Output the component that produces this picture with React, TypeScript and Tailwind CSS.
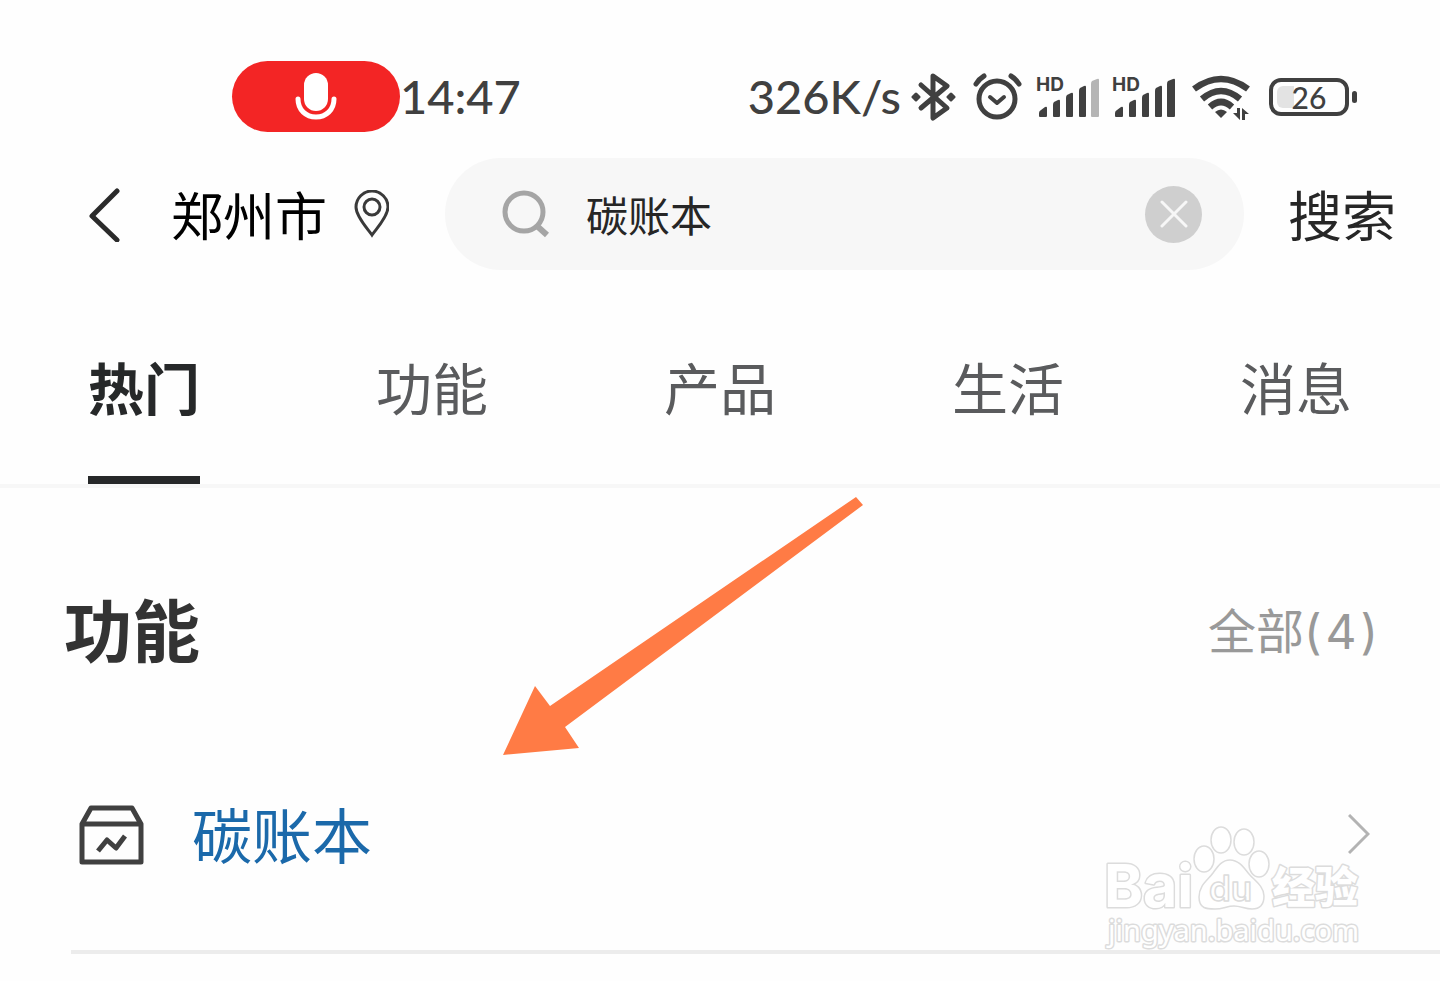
const tabs = ['热门', '功能', '产品', '生活', '消息'];

function SignalIcon({ weak }: { weak?: boolean }) {
  return (
    <svg className="h-[44px] w-[64px] shrink-0 overflow-visible" viewBox="0 0 64 44" fill="#404040">
      <text x="0" y="16" fontFamily="Inter, sans-serif" fontSize="19" fontWeight="700">
        HD
      </text>
      <path d="M3 38q0-2 2-3l4-3q2-1 2 1v8q0 1-1 1H4q-1 0-1-1z" />
      <path d="M17 30q0-2 1-3l4-2q2-1 2 1v15q0 1-1 1h-5q-1 0-1-1z" />
      <path d="M30 23q0-2 1-3l4-2q2-1 2 1v22q0 1-1 1h-5q-1 0-1-1z" />
      <path d="M43 16q0-2 1-3l4-2q2-1 2 1v29q0 1-1 1h-5q-1 0-1-1z" />
      <path
        d="M55 9q0-2 1-3l5-2q2-1 2 1v36q0 1-1 1h-6q-1 0-1-1z"
        fill={weak ? '#b5b5b5' : '#404040'}
      />
    </svg>
  );
}

function StatusBar() {
  return (
    <div className="flex h-[71px] items-center justify-between pr-[83px] pl-[232px] font-['Lato',sans-serif] text-[47px] font-medium text-[#404040]">
      <div className="flex items-center">
        <span className="flex h-[71px] w-[168px] items-center justify-center rounded-full bg-[#f32525]">
          <svg className="h-[48px] w-[42px]" viewBox="0 0 42 48" fill="none">
            <rect x="9" y="0" width="24" height="38" rx="12" fill="#fff" />
            <path
              d="M3 26c0 11 8 18 18 18s18-7 18-18"
              stroke="#fff"
              strokeWidth="5"
              strokeLinecap="round"
            />
          </svg>
        </span>
        <span>14:47</span>
      </div>
      <div className="flex items-center">
        <span>326K/s</span>
        <svg
          className="ml-[10px] h-[50px] w-[46px] shrink-0"
          viewBox="0 0 46 50"
          fill="none"
          stroke="#404040"
          strokeWidth="5"
          strokeLinecap="round"
          strokeLinejoin="round"
        >
          <path d="M10 13l26 23-14 10V4l14 10-26 22" />
          <path
            d="M2 25l3-3 3 3-3 3zM37 25l3-3 3 3-3 3z"
            fill="#404040"
            strokeWidth="3"
          />
        </svg>
        <svg
          className="ml-[16px] h-[48px] w-[50px] shrink-0"
          viewBox="0 0 50 48"
          fill="none"
          stroke="#404040"
          strokeWidth="5"
          strokeLinecap="round"
          strokeLinejoin="round"
        >
          <circle cx="24" cy="26" r="18" />
          <path d="M17 24l7 6 7-6" strokeWidth="4" />
          <path d="M3 11q3-5 8-8M46 11q-3-5-8-8" />
        </svg>
        <div className="ml-[13px] flex gap-3">
          <SignalIcon weak />
          <SignalIcon />
        </div>
        <svg className="ml-[16px] h-[44px] w-[58px] shrink-0 overflow-visible" viewBox="0 0 58 44" fill="none">
          <g stroke="#404040" strokeWidth="6.5">
            <path d="M2 14Q29-6 56 14" />
            <path d="M10 24Q29 8 48 24" />
            <path d="M18 32Q29 22 40 32" />
          </g>
          <path d="M23 37q6-5 12 0l-6 6z" fill="#404040" />
          <path d="M45 33h3v12l-7-7h4zM50 45V33l7 6h-4v6z" fill="#404040" />
        </svg>
        <div className="ml-[19px] flex items-center gap-[3px]">
          <div className="relative flex h-[38px] w-[80px] items-center justify-center rounded-xl border-4 border-[#404040] text-[30px] leading-none">
            <span className="absolute top-1 bottom-1 left-1 w-[17px] rounded-l-md bg-[#e3e3e3]" />
            <span className="relative">26</span>
          </div>
          <span className="h-3 w-[5px] rounded-full bg-[#404040]" />
        </div>
      </div>
    </div>
  );
}

function SearchBar() {
  return (
    <form className="mt-[26px] flex h-[112px] items-center pr-[44px] pl-[88px]">
      <button type="button" aria-label="返回" className="shrink-0">
        <svg
          className="h-[56px] w-[34px]"
          viewBox="0 0 34 56"
          fill="none"
          stroke="#2b2b2b"
          strokeWidth="5"
          strokeLinecap="round"
          strokeLinejoin="round"
        >
          <path d="M29 5L4 30l25 24" />
        </svg>
      </button>
      <button type="button" className="ml-[49px] flex shrink-0 items-center gap-[26px] text-[52px] leading-[76px] text-black">
        郑州市
        <svg className="h-[48px] w-[36px]" viewBox="0 0 36 48" fill="none" stroke="#3a3a3a" strokeWidth="3">
          <path d="M19 45C15 39 3 27 3 17a16 16 0 0 1 32 0c0 10-12 22-16 28z" />
          <circle cx="19" cy="17" r="8" />
        </svg>
      </button>
      <div className="ml-[56px] flex h-full min-w-0 flex-1 items-center rounded-full bg-[#f7f7f7] pr-[42px] pl-[57px]">
        <svg className="h-[48px] w-[48px] shrink-0" viewBox="0 0 48 48" fill="none" stroke="#a5a5a5" strokeWidth="5">
          <circle cx="22" cy="22" r="19" />
          <path d="M35 36l10 9" strokeWidth="6" />
        </svg>
        <input
          type="text"
          aria-label="搜索内容"
          defaultValue="碳账本"
          className="ml-[36px] min-w-0 flex-1 bg-transparent text-[42px] leading-[60px] text-[#262626] outline-none"
        />
        <button
          type="button"
          aria-label="清除"
          className="flex h-[57px] w-[57px] shrink-0 items-center justify-center rounded-full bg-[#cfcfcf]"
        >
          <svg className="h-[28px] w-[28px]" viewBox="0 0 28 28" stroke="#f7f7f7" strokeWidth="3" strokeLinecap="round">
            <path d="M2 2l24 24M26 2L2 26" />
          </svg>
        </button>
      </div>
      <button type="submit" className="ml-[44px] shrink-0 text-[54px] leading-[76px] text-[#262626]">
        搜索
      </button>
    </form>
  );
}

function Watermark() {
  return (
    <svg
      className="pointer-events-none absolute right-[50px] bottom-0 h-[150px] w-[300px] overflow-visible"
      viewBox="0 0 300 150"
      fill="#fff"
      stroke="#dcdcdc"
      strokeWidth="1.5"
      strokeLinejoin="round"
    >
      <ellipse cx="114" cy="59" rx="10" ry="13" />
      <ellipse cx="131" cy="40" rx="10" ry="13" />
      <ellipse cx="154" cy="42" rx="10" ry="13" />
      <ellipse cx="169" cy="64" rx="10" ry="13" />
      <path d="M140 60c-8 0-12 6-17 13s-14 12-14 24 8 12 16 12 12-3 19-3 11 3 18 3 12-3 12-13-10-16-15-22-10-14-19-14z" />
      <text x="119" y="101" fontFamily="Inter, sans-serif" fontSize="35" fontWeight="600">
        du
      </text>
      <g strokeWidth="3" paintOrder="stroke">
        <text x="14" y="107" fontFamily="Inter, sans-serif" fontSize="59" fontWeight="700">
          Bai
        </text>
        <text x="182" y="103" fontFamily="'Noto Sans CJK SC', sans-serif" fontSize="43" fontWeight="900">
          经验
        </text>
        <text x="18" y="141" fontFamily="'Noto Sans', sans-serif" fontSize="29">
          jingyan.baidu.com
        </text>
      </g>
    </svg>
  );
}

export default function App() {
  return (
    <div className="min-h-screen bg-[#fefefe] pt-[61px] font-['Noto_Sans_CJK_SC',sans-serif]">
      <header>
        <StatusBar />
        <SearchBar />
        <nav className="grid grid-cols-5 justify-items-center border-b-4 border-[#f7f7f7] pt-[74px]">
          {tabs.map((tab, i) => (
            <a
              key={tab}
              href="#"
              className={
                i === 0
                  ? 'border-b-8 border-[#262829] pb-[48px] text-[56px] leading-[84px] font-bold text-[#262829]'
                  : 'pb-[56px] text-[56px] leading-[84px] text-[#5a5b5d]'
              }
            >
              {tab}
            </a>
          ))}
        </nav>
      </header>

      <main className="relative pt-[92px]">
        <div className="flex items-end justify-between pr-[62px] pl-[64px]">
          <h2 className="text-[68px] leading-[96px] font-bold text-[#333333]">功能</h2>
          <a href="#" className="font-['Inter','Noto_Sans_CJK_SC',sans-serif] text-[48px] leading-[88px] text-[#999999]">
            全部(<span className="mx-1">4</span>)
          </a>
        </div>

        <div className="relative mt-[44px] ml-[71px] border-b-4 border-[#ececec]">
          <a href="#" className="flex h-[230px] items-center pr-[70px] pl-[8px] text-[60px] text-[#1b69aa]">
            <svg
              className="h-[60px] w-[65px]"
              viewBox="0 0 65 60"
              fill="none"
              stroke="#404040"
              strokeWidth="5"
              strokeLinejoin="round"
            >
              <path d="M3 19L12 3h41l9 16v38H3zM3 19h59" />
              <path d="M19 46l9-11 9 8 9-12" />
            </svg>
            <span className="ml-[48px] pb-1">碳账本</span>
            <svg className="ml-auto h-[42px] w-[22px]" viewBox="0 0 22 42" fill="none" stroke="#b3b3b3" strokeWidth="3">
              <path d="M1 1l19 19L1 39" />
            </svg>
          </a>
          <Watermark />
        </div>

        <svg className="pointer-events-none absolute top-[9px] left-[502px] h-[260px] w-[362px]" viewBox="0 0 362 260" fill="#ff7b45">
          <path d="M354 0l7 8L63 230l14 21-76 7 32-69 15 20z" />
        </svg>
      </main>
    </div>
  );
}
